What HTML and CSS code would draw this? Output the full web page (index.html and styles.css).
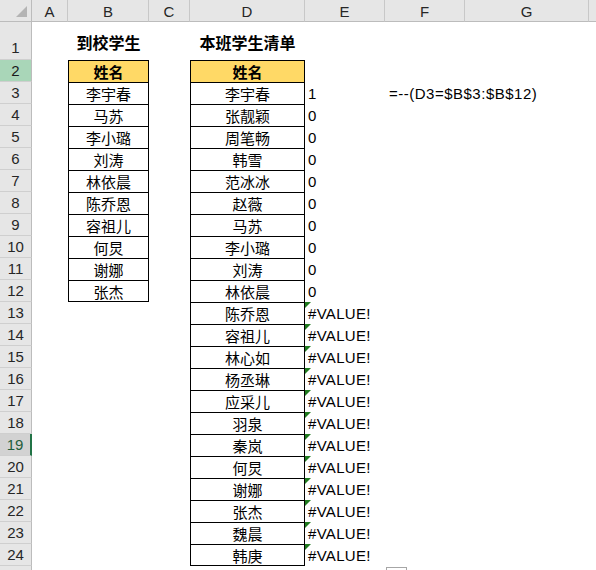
FILE: index.html
```html
<!DOCTYPE html>
<html lang="zh">
<head>
<meta charset="utf-8">
<title>Sheet</title>
<link rel="stylesheet" href="styles.css">
</head>
<body>
<div class="sheet">
  <div class="row">
    <div class="corner"><span class="tri"></span></div>
    <div class="ch">A</div><div class="ch">B</div><div class="ch">C</div><div class="ch">D</div>
    <div class="ch">E</div><div class="ch">F</div><div class="ch">G</div><div class="ch last"></div>
  </div>
  <div class="row">
    <div class="rh first">1</div><div class="c"></div><div class="c title">到校学生</div><div class="c"></div><div class="c title">本班学生清单</div><div class="c"></div><div class="c"></div><div class="c"></div><div class="c"></div>
  </div>
  <div class="row">
    <div class="rh sel">2</div><div class="c"></div><div class="c t hd">姓名</div><div class="c"></div><div class="c t hd">姓名</div><div class="c"></div><div class="c"></div><div class="c"></div><div class="c"></div>
  </div>
  <div class="row">
    <div class="rh">3</div><div class="c"></div><div class="c t">李宇春</div><div class="c"></div><div class="c t">李宇春</div><div class="c v">1</div><div class="c f">=--(D3=$B$3:$B$12)</div><div class="c"></div><div class="c"></div>
  </div>
  <div class="row">
    <div class="rh">4</div><div class="c"></div><div class="c t">马苏</div><div class="c"></div><div class="c t">张靓颖</div><div class="c v">0</div><div class="c"></div><div class="c"></div><div class="c"></div>
  </div>
  <div class="row">
    <div class="rh">5</div><div class="c"></div><div class="c t">李小璐</div><div class="c"></div><div class="c t">周笔畅</div><div class="c v">0</div><div class="c"></div><div class="c"></div><div class="c"></div>
  </div>
  <div class="row">
    <div class="rh">6</div><div class="c"></div><div class="c t">刘涛</div><div class="c"></div><div class="c t">韩雪</div><div class="c v">0</div><div class="c"></div><div class="c"></div><div class="c"></div>
  </div>
  <div class="row">
    <div class="rh">7</div><div class="c"></div><div class="c t">林依晨</div><div class="c"></div><div class="c t">范冰冰</div><div class="c v">0</div><div class="c"></div><div class="c"></div><div class="c"></div>
  </div>
  <div class="row">
    <div class="rh">8</div><div class="c"></div><div class="c t">陈乔恩</div><div class="c"></div><div class="c t">赵薇</div><div class="c v">0</div><div class="c"></div><div class="c"></div><div class="c"></div>
  </div>
  <div class="row">
    <div class="rh">9</div><div class="c"></div><div class="c t">容祖儿</div><div class="c"></div><div class="c t">马苏</div><div class="c v">0</div><div class="c"></div><div class="c"></div><div class="c"></div>
  </div>
  <div class="row">
    <div class="rh">10</div><div class="c"></div><div class="c t">何炅</div><div class="c"></div><div class="c t">李小璐</div><div class="c v">0</div><div class="c"></div><div class="c"></div><div class="c"></div>
  </div>
  <div class="row">
    <div class="rh">11</div><div class="c"></div><div class="c t">谢娜</div><div class="c"></div><div class="c t">刘涛</div><div class="c v">0</div><div class="c"></div><div class="c"></div><div class="c"></div>
  </div>
  <div class="row">
    <div class="rh">12</div><div class="c"></div><div class="c t tb">张杰</div><div class="c"></div><div class="c t">林依晨</div><div class="c v">0</div><div class="c"></div><div class="c"></div><div class="c"></div>
  </div>
  <div class="row">
    <div class="rh">13</div><div class="c"></div><div class="c"></div><div class="c"></div><div class="c t">陈乔恩</div><div class="c v err">#VALUE!</div><div class="c"></div><div class="c"></div><div class="c"></div>
  </div>
  <div class="row">
    <div class="rh">14</div><div class="c"></div><div class="c"></div><div class="c"></div><div class="c t">容祖儿</div><div class="c v err">#VALUE!</div><div class="c"></div><div class="c"></div><div class="c"></div>
  </div>
  <div class="row">
    <div class="rh">15</div><div class="c"></div><div class="c"></div><div class="c"></div><div class="c t">林心如</div><div class="c v err">#VALUE!</div><div class="c"></div><div class="c"></div><div class="c"></div>
  </div>
  <div class="row">
    <div class="rh">16</div><div class="c"></div><div class="c"></div><div class="c"></div><div class="c t">杨丞琳</div><div class="c v err">#VALUE!</div><div class="c"></div><div class="c"></div><div class="c"></div>
  </div>
  <div class="row">
    <div class="rh">17</div><div class="c"></div><div class="c"></div><div class="c"></div><div class="c t">应采儿</div><div class="c v err">#VALUE!</div><div class="c"></div><div class="c"></div><div class="c"></div>
  </div>
  <div class="row">
    <div class="rh">18</div><div class="c"></div><div class="c"></div><div class="c"></div><div class="c t">羽泉</div><div class="c v err">#VALUE!</div><div class="c"></div><div class="c"></div><div class="c"></div>
  </div>
  <div class="row">
    <div class="rh hover">19</div><div class="c"></div><div class="c"></div><div class="c"></div><div class="c t">秦岚</div><div class="c v err">#VALUE!</div><div class="c"></div><div class="c"></div><div class="c"></div>
  </div>
  <div class="row">
    <div class="rh">20</div><div class="c"></div><div class="c"></div><div class="c"></div><div class="c t">何炅</div><div class="c v err">#VALUE!</div><div class="c"></div><div class="c"></div><div class="c"></div>
  </div>
  <div class="row">
    <div class="rh">21</div><div class="c"></div><div class="c"></div><div class="c"></div><div class="c t">谢娜</div><div class="c v err">#VALUE!</div><div class="c"></div><div class="c"></div><div class="c"></div>
  </div>
  <div class="row">
    <div class="rh">22</div><div class="c"></div><div class="c"></div><div class="c"></div><div class="c t">张杰</div><div class="c v err">#VALUE!</div><div class="c"></div><div class="c"></div><div class="c"></div>
  </div>
  <div class="row">
    <div class="rh">23</div><div class="c"></div><div class="c"></div><div class="c"></div><div class="c t">魏晨</div><div class="c v err">#VALUE!</div><div class="c"></div><div class="c"></div><div class="c"></div>
  </div>
  <div class="row">
    <div class="rh">24</div><div class="c"></div><div class="c"></div><div class="c"></div><div class="c t tb">韩庚</div><div class="c v err">#VALUE!</div><div class="c"></div><div class="c"></div><div class="c"></div>
  </div>
  <div class="row">
    <div class="rh"></div><div class="c"></div><div class="c"></div><div class="c"></div><div class="c"></div><div class="c"></div><div class="c"></div><div class="c"></div><div class="c"></div>
  </div>
  <div class="qa"></div>
</div>
</body>
</html>
```

FILE: styles.css
```css
html, body {
  margin: 0;
  padding: 0;
  background: #fff;
}
body {
  font-family: "Liberation Sans", "Noto Sans CJK SC", sans-serif;
  font-size: 15px;
  color: #000;
  overflow: hidden;
}
.sheet {
  position: relative;
  display: grid;
  grid-template-columns: 32px 36px 81px 41px 115px 80px 80px 124px 7px;
  grid-template-rows: 22px 38px repeat(24, 22px);
  width: 596px;
  height: 570px;
  overflow: hidden;
}
.row {
  display: contents;
}
.corner {
  position: relative;
  background: #e6e6e6;
  border-right: 1px solid #bcbcbc;
  border-bottom: 1px solid #bcbcbc;
  box-sizing: border-box;
}
.tri {
  position: absolute;
  right: 4px;
  bottom: 4px;
  width: 0;
  height: 0;
  border-left: 11px solid transparent;
  border-bottom: 11px solid #b4b4b4;
}
.ch {
  background: #e6e6e6;
  border-right: 1px solid #c8c8c8;
  border-bottom: 1px solid #bcbcbc;
  box-sizing: border-box;
  display: flex;
  align-items: center;
  justify-content: center;
  color: #262626;
  font-size: 15px;
  padding-top: 1px;
}
.ch.last {
  border-right: none;
}
.rh {
  background: #e6e6e6;
  border-right: 1px solid #bcbcbc;
  border-bottom: 1px solid #cfcfcf;
  box-sizing: border-box;
  display: flex;
  align-items: center;
  justify-content: center;
  color: #262626;
  font-size: 15px;
}
.rh.first {
  align-items: flex-end;
  padding-bottom: 3px;
}
.rh.sel {
  background: #a9d6b8;
  color: #1a1a1a;
}
.rh.hover {
  background: #d2d2d2;
  border-right: 2px solid #217346;
  color: #1e5e3c;
}
.c {
  box-sizing: border-box;
  display: flex;
  align-items: center;
  justify-content: center;
  white-space: nowrap;
  min-width: 0;
}
.title {
  font-weight: bold;
  font-size: 16px;
  padding-top: 2px;
}
.t {
  border-left: 1px solid #000;
  border-right: 1px solid #000;
  border-top: 1px solid #000;
}
.tb {
  border-bottom: 1px solid #000;
}
.hd {
  background: #ffd966;
  font-weight: bold;
}
.v {
  justify-content: flex-start;
  padding-left: 3px;
  position: relative;
  overflow: visible;
}
.err {
  letter-spacing: 0.3px;
}
.err::before {
  content: "";
  position: absolute;
  left: 0;
  top: 0;
  width: 0;
  height: 0;
  border-top: 6px solid #1f7a1f;
  border-right: 6px solid transparent;
}
.f {
  justify-content: flex-start;
  padding-left: 4px;
  overflow: visible;
  letter-spacing: 0.5px;
}
.qa {
  position: absolute;
  left: 386px;
  top: 567px;
  width: 19px;
  height: 10px;
  border: 1px solid #a6a6a6;
  background: #fff;
}
```
